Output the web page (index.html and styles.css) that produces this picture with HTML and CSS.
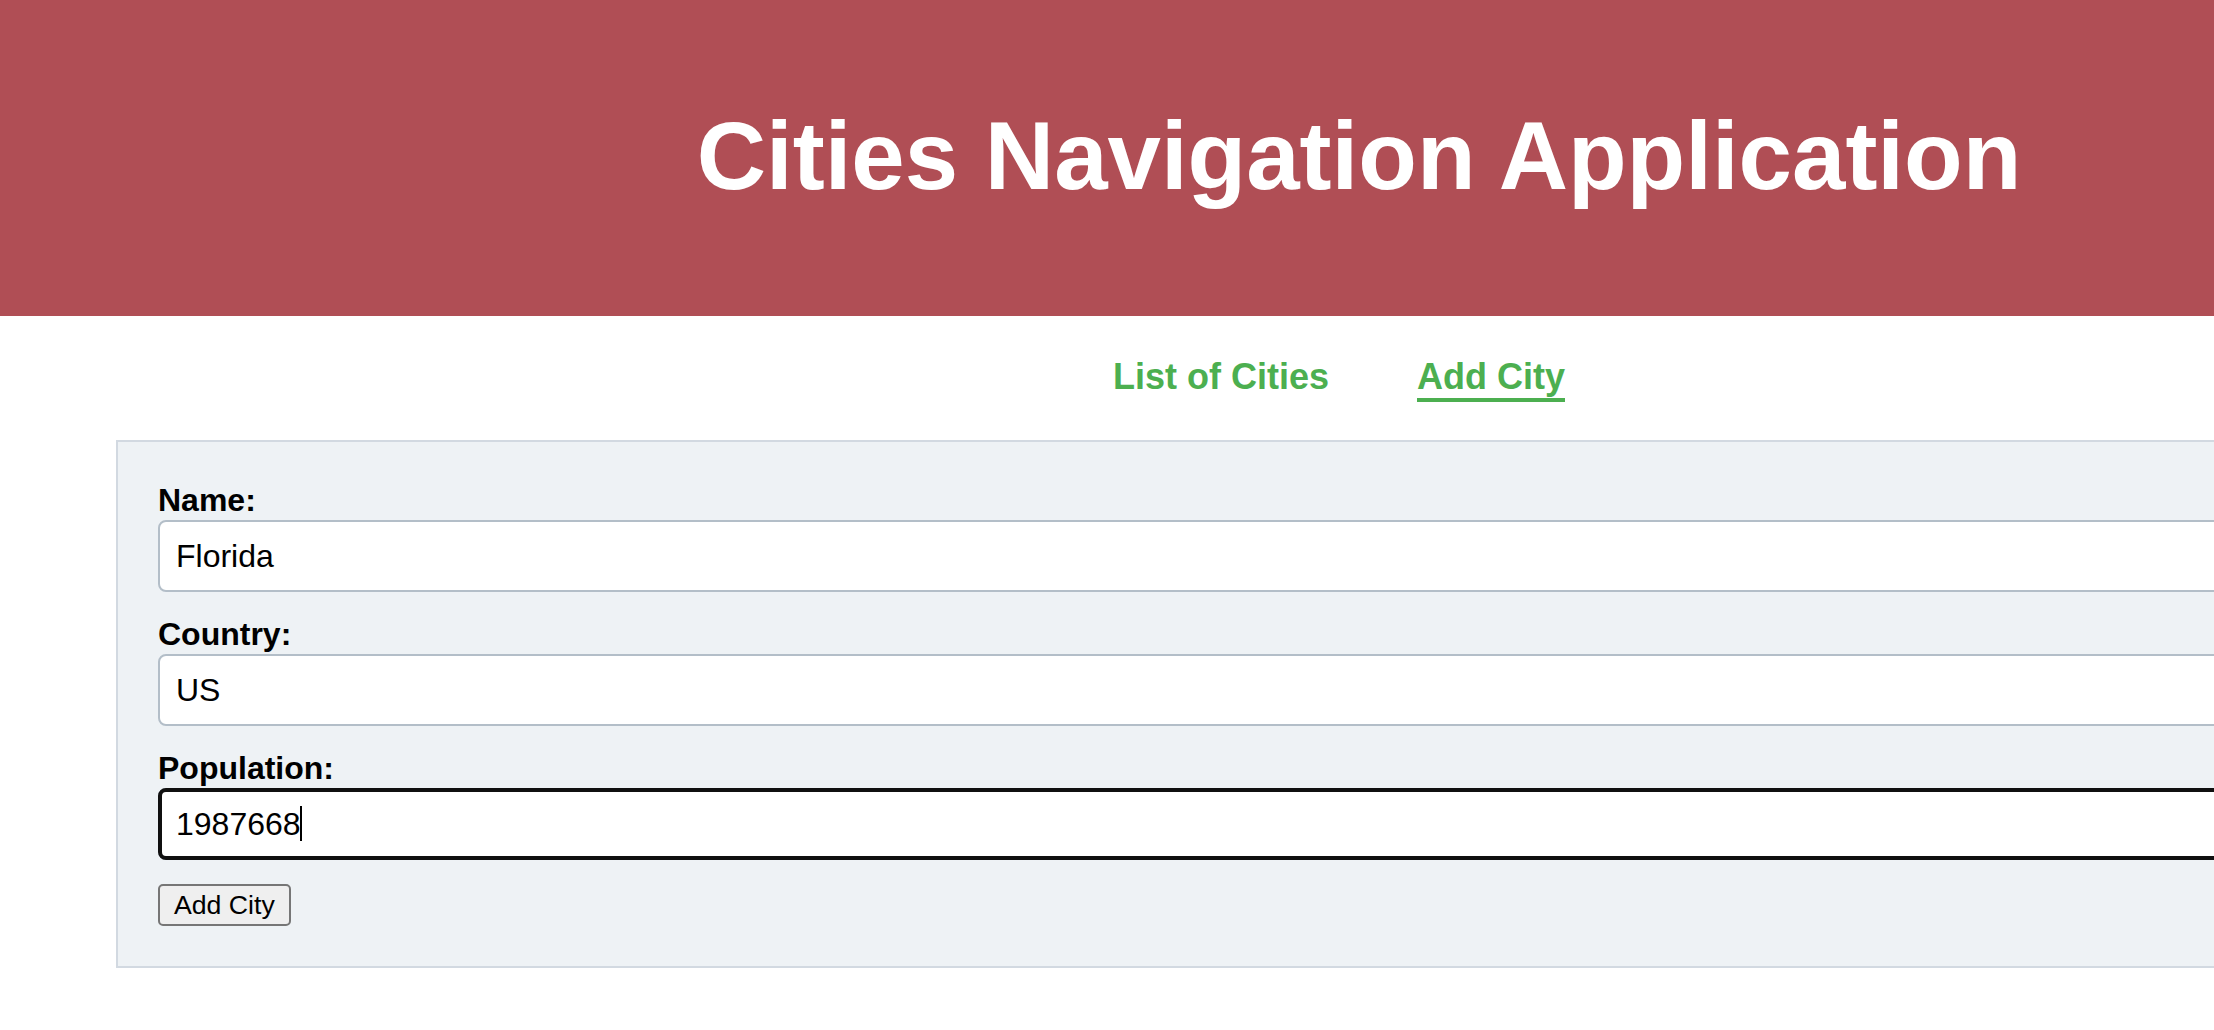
FILE: index.html
```html
<!DOCTYPE html>
<html lang="en">
<head>
<meta charset="utf-8">
<title>Cities Navigation Application</title>
<link rel="stylesheet" href="styles.css">
</head>
<body>
<div class="page">
  <header class="app-header">
    <h1 class="app-title">Cities Navigation Application</h1>
  </header>
  <nav class="app-nav">
    <a class="nav-link" href="#">List of Cities</a>
    <a class="nav-link active" href="#">Add City</a>
  </nav>
  <form class="city-form">
    <div class="form-group">
      <label class="form-label" for="name">Name:</label>
      <input class="form-input" id="name" type="text" value="Florida">
    </div>
    <div class="form-group">
      <label class="form-label" for="country">Country:</label>
      <input class="form-input" id="country" type="text" value="US">
    </div>
    <div class="form-group">
      <label class="form-label" for="population">Population:</label>
      <div class="input-wrap">
        <input class="form-input focused" id="population" type="text" value="1987668">
        <span class="caret"></span>
      </div>
    </div>
    <button class="submit-btn" type="button">Add City</button>
  </form>
</div>
</body>
</html>
```

FILE: styles.css
```css
html, body {
  margin: 0;
  padding: 0;
  overflow: hidden;
  background: #ffffff;
  font-family: "Liberation Sans", Arial, sans-serif;
}

.page {
  width: 2718px;
}

.app-header {
  height: 316px;
  background: #b04e55;
  display: flex;
  align-items: center;
  justify-content: center;
  box-sizing: border-box;
  padding-bottom: 4px;
}

.app-title {
  margin: 0;
  color: #ffffff;
  font-size: 96px;
  font-weight: bold;
  line-height: 110px;
}

.app-nav {
  display: flex;
  justify-content: center;
  gap: 88px;
  padding-right: 40px;
  margin-top: 40px;
  line-height: 41px;
}

.nav-link {
  color: #4caf50;
  font-size: 36px;
  font-weight: bold;
  text-decoration: none;
  padding-bottom: 1px;
  border-bottom: 4px solid transparent;
}

.nav-link.active {
  border-bottom-color: #4caf50;
}

.city-form {
  margin: 38px 116px 0 116px;
  padding: 40px;
  background: #eef2f5;
  border: 2px solid #d2d9e1;
}

.form-group {
  margin-bottom: 24px;
}

.form-label {
  display: block;
  font-size: 32px;
  font-weight: bold;
  line-height: 36px;
  color: #000000;
  margin-bottom: 2px;
}

.input-wrap {
  position: relative;
}

.form-input {
  display: block;
  width: 100%;
  height: 72px;
  box-sizing: border-box;
  border: 2px solid #b3bec8;
  border-radius: 8px;
  background: #ffffff;
  padding: 0 16px;
  font-family: "Liberation Sans", Arial, sans-serif;
  font-size: 32px;
  color: #000000;
}

.form-input.focused {
  outline: 4px solid #101010;
  outline-offset: -4px;
}

.caret {
  position: absolute;
  left: 142px;
  top: 18px;
  width: 2px;
  height: 35px;
  background: #000000;
}

.submit-btn {
  display: block;
  height: 42px;
  padding: 0 14px;
  font-family: "Liberation Sans", Arial, sans-serif;
  font-size: 26.67px;
  color: #000000;
  background: #efefef;
  border: 2px solid #767676;
  border-radius: 5px;
}
```
